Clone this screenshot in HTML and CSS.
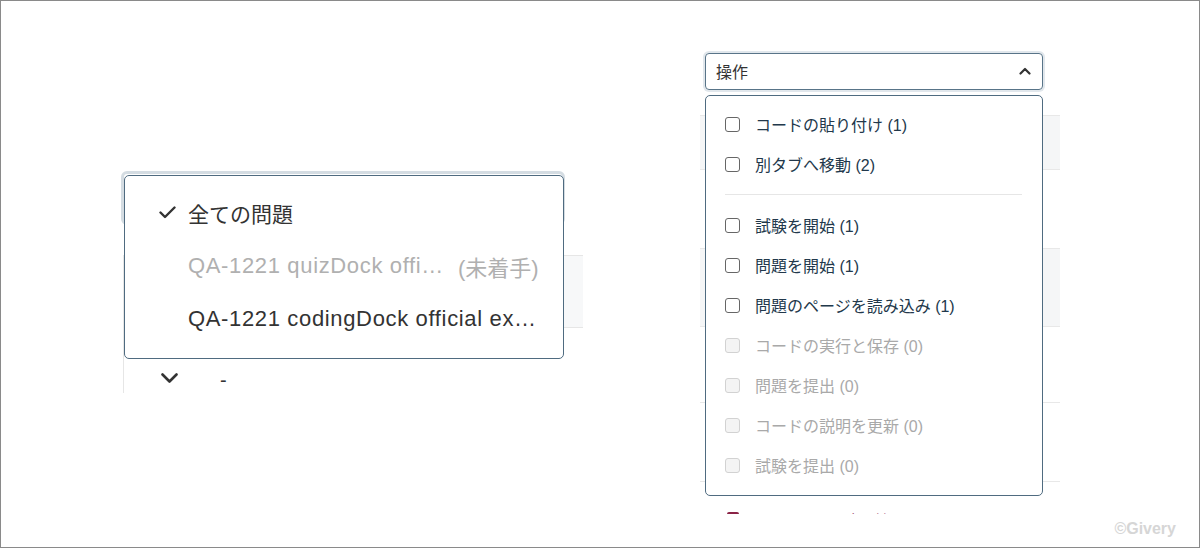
FILE: index.html
```html
<!DOCTYPE html>
<html lang="ja">
<head>
  <meta charset="UTF-8">
  <meta name="viewport" content="width=device-width, initial-scale=1.0">
  <title>フィルター</title>
  <link rel="stylesheet" href="styles.css">
</head>
<body>
  <div class="frame">

    <!-- problem filter -->
    <div class="scene scene-left">
      <div class="picker"></div>
      <div class="grid">
        <div class="grid-row shade"></div>
        <div class="grid-row open-row">
          <svg class="chev" width="17" height="10" viewBox="0 0 17 10"><path d="M1.5 1.5 L8.5 8.5 L15.5 1.5" fill="none" stroke="#333" stroke-width="2.6" stroke-linecap="round" stroke-linejoin="round"/></svg>
          <span class="dash">-</span>
        </div>
      </div>

      <div class="menu">
        <div class="menu-item selected">
          <svg class="check" width="17" height="13" viewBox="0 0 17 13"><path d="M1.5 6.5 L6 11 L15.5 1.5" fill="none" stroke="#333" stroke-width="2.4" stroke-linecap="round" stroke-linejoin="round"/></svg>
          <span>全ての問題</span>
        </div>
        <div class="menu-item muted">
          <span class="latin">QA-1221 quizDock offi…</span><span class="status">(未着手)</span>
        </div>
        <div class="menu-item">
          <span class="latin">QA-1221 codingDock official ex…</span>
        </div>
      </div>
    </div>

    <!-- action filter -->
    <div class="scene scene-right">
      <div class="picker-sm">
        <span>操作</span>
        <svg width="12" height="8" viewBox="0 0 12 8"><path d="M1.5 6.5 L6 2 L10.5 6.5" fill="none" stroke="#333" stroke-width="2.2" stroke-linecap="round" stroke-linejoin="round"/></svg>
      </div>
      <div class="table">
        <div class="t-row t-head"></div>
        <div class="t-row t-r2"></div>
        <div class="t-row t-r3 shade"></div>
        <div class="t-row t-r4"></div>
        <div class="t-row t-r5"></div>
        <div class="t-row t-r6">
          <span class="box-on"></span>
          <span class="red-text">コードの貼り付け (1)</span>
        </div>
      </div>

      <div class="menu-sm">
        <label class="opt"><span class="box"></span>コードの貼り付け (1)</label>
        <label class="opt"><span class="box"></span>別タブへ移動 (2)</label>
        <div class="sep"></div>
        <label class="opt"><span class="box"></span>試験を開始 (1)</label>
        <label class="opt"><span class="box"></span>問題を開始 (1)</label>
        <label class="opt"><span class="box"></span>問題のページを読み込み (1)</label>
        <label class="opt off"><span class="box"></span>コードの実行と保存 (0)</label>
        <label class="opt off"><span class="box"></span>問題を提出 (0)</label>
        <label class="opt off"><span class="box"></span>コードの説明を更新 (0)</label>
        <label class="opt off"><span class="box"></span>試験を提出 (0)</label>
      </div>
    </div>

    <div class="mark">©Givery</div>
  </div>
</body>
</html>
```

FILE: styles.css
```css
body {
  margin: 0;
  font-family: "Liberation Sans", "Noto Sans CJK JP", sans-serif;
  background: #fff;
}
.frame {
  position: relative;
  width: 1200px;
  height: 548px;
  box-sizing: border-box;
  border: 1px solid #8a8a8a;
  display: flex;
  align-items: flex-start;
  overflow: hidden;
}
.scene {
  position: relative;
  overflow: hidden;
  flex-shrink: 0;
}

/* left */
.scene-left {
  margin-left: 120px;
  margin-top: 170px;
  width: 462px;
  height: 222px;
}
.picker {
  width: 444px;
  height: 54px;
  box-sizing: border-box;
  border: 3px solid #d4dce2;
  border-radius: 6px;
}
.grid {
  margin-top: 30px;
  margin-left: 2px;
  border-left: 1px solid #e6e6e6;
}
.grid-row.shade {
  height: 73px;
  box-sizing: border-box;
  background: #f7f8f9;
  border-top: 1px solid #e6e6e6;
  border-bottom: 1px solid #e6e6e6;
}
.open-row {
  height: 100px;
  display: flex;
  align-items: center;
}
.chev {
  margin-left: 37px;
}
.dash {
  margin-left: 42px;
  font-size: 20px;
  color: #333;
  position: relative;
  top: 2px;
}
.menu {
  position: absolute;
  left: 3px;
  top: 4px;
  width: 440px;
  height: 184px;
  box-sizing: border-box;
  padding: 10px 0;
  background: #fff;
  border: 1px solid #4f6b80;
  border-radius: 5px;
}
.menu-item {
  height: 53px;
  display: flex;
  align-items: center;
  padding-left: 63px;
  font-size: 21px;
  color: #333;
  white-space: nowrap;
}
.menu-item .latin {
  font-size: 22px;
  letter-spacing: 0.65px;
}
.menu-item.selected {
  padding-left: 34px;
}
.check {
  margin-right: 12px;
}
.menu-item.muted {
  color: #b0b0b0;
}
.status {
  margin-left: 14px;
  font-size: 22px;
}

/* right */
.scene-right {
  margin-left: 117px;
  margin-top: 49px;
  width: 360px;
  height: 464px;
}
.picker-sm {
  margin: 3px 0 0 5px;
  width: 338px;
  height: 37px;
  box-sizing: border-box;
  border: 1px solid #587488;
  border-radius: 4px;
  box-shadow: 0 0 0 2px #e1e7ec;
  display: flex;
  align-items: center;
  justify-content: space-between;
  padding: 0 11px 2px 10px;
  font-size: 16px;
  color: #333;
}
.table {
  margin-top: 25px;
}
.t-row {
  box-sizing: border-box;
  border-bottom: 1px solid #e8e8e8;
}
.t-head {
  height: 55px;
  border-top: 1px solid #e8e8e8;
  background: #f5f6f7;
}
.t-r2 { height: 79px; }
.t-r3 { height: 78px; }
.t-r4 { height: 76px; }
.t-r5 { height: 79px; }
.shade {
  background: #f5f6f7;
}
.t-r6 {
  border-bottom: none;
  display: flex;
  align-items: flex-start;
  padding: 29px 0 0 27px;
}
.box-on {
  width: 12px;
  height: 12px;
  margin-top: 1px;
  border-radius: 2px;
  background: #8b2346;
}
.red-text {
  margin-left: 44px;
  font-size: 15px;
  line-height: 18px;
  margin-top: 1px;
  color: #8b2346;
}
.menu-sm {
  position: absolute;
  left: 5px;
  top: 45px;
  width: 338px;
  height: 401px;
  box-sizing: border-box;
  padding: 8px 0;
  background: #fff;
  border: 1px solid #4f6b80;
  border-radius: 5px;
}
.opt {
  height: 40px;
  display: flex;
  align-items: center;
  padding-left: 19px;
  font-size: 16px;
  color: #22384b;
  white-space: nowrap;
}
.box {
  width: 15px;
  height: 15px;
  box-sizing: border-box;
  border: 1.5px solid #666;
  border-radius: 3px;
  margin-right: 15px;
  background: #fff;
}
.opt.off {
  color: #a9a9a9;
}
.opt.off .box {
  border-color: #d2d2d2;
  background: #f4f4f4;
}
.sep {
  height: 1px;
  margin: 10px 20px 10px 19px;
  background: #e6e6e6;
}
.mark {
  position: absolute;
  right: 23px;
  bottom: 9px;
  font-size: 16px;
  font-weight: bold;
  color: #d6d6d6;
}
```
